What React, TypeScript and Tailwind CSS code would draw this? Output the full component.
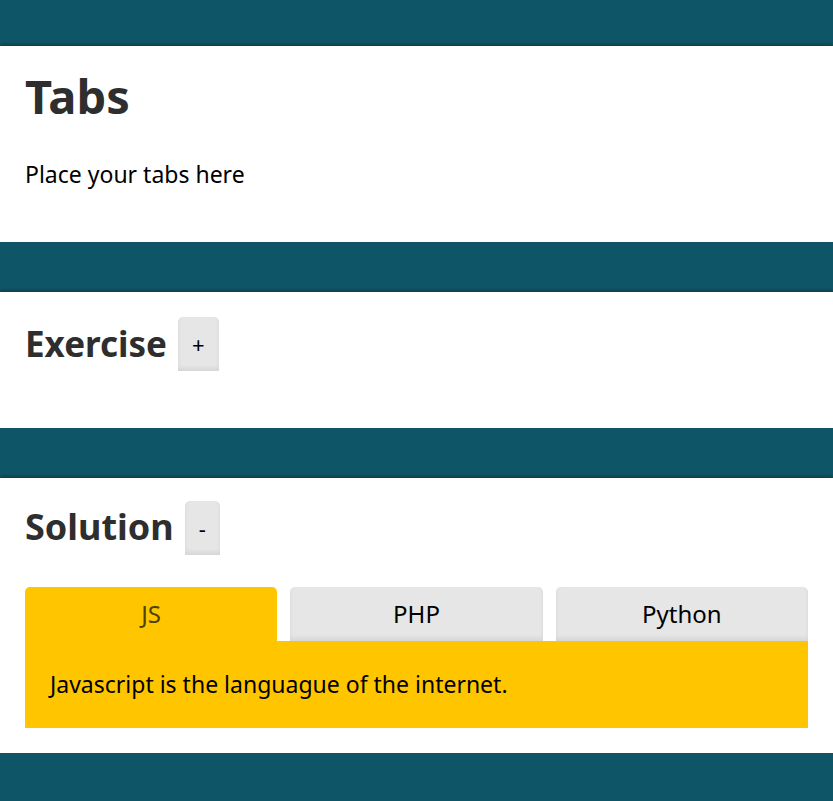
import { useState } from "react";

const tabs = [
  { id: "js", label: "JS", text: "Javascript is the languague of the internet." },
  { id: "php", label: "PHP", text: "PHP runs on the server." },
  { id: "py", label: "Python", text: "Python is great for scripting." },
];

function ToggleButton({ label, onClick }: { label: string; onClick: () => void }) {
  return (
    <button
      onClick={onClick}
      className="h-[54px] px-[14px] bg-[#e6e6e6] rounded-t-[5px] text-[22px] text-black shadow-[inset_0_-3px_4px_rgba(0,0,0,0.07)]"
    >
      {label}
    </button>
  );
}

export default function App() {
  const [exerciseOpen, setExerciseOpen] = useState(false);
  const [solutionOpen, setSolutionOpen] = useState(true);
  const [active, setActive] = useState("js");
  const current = tabs.find((t) => t.id === active);

  return (
    <div
      className="min-h-screen bg-[#0f5568] pt-[46px] pb-12 flex flex-col gap-[50px]"
      style={{ fontFamily: '"Noto Sans", "Open Sans", sans-serif' }}
    >
      {/* Section 1: intro */}
      <section className="bg-white h-[196px] px-[25px] pt-[64px] shadow-[0_-2px_3px_rgba(0,0,0,0.25)]">
        <h1 className="text-[47px] font-bold text-[#2e2e2e] leading-none -mt-[37px]">Tabs</h1>
        <p className="text-[23px] text-black mt-[43px] leading-none">Place your tabs here</p>
      </section>

      {/* Section 2: exercise */}
      <section className="bg-white h-[136px] px-[25px] pt-[25px] shadow-[0_-2px_3px_rgba(0,0,0,0.25)]">
        <div className="flex items-center gap-[11px]">
          <h2 className="text-[35px] font-bold text-[#2e2e2e]">Exercise</h2>
          <ToggleButton label={exerciseOpen ? "-" : "+"} onClick={() => setExerciseOpen(!exerciseOpen)} />
        </div>
      </section>

      {/* Section 3: solution */}
      <section className="bg-white h-[275px] px-[25px] pt-[23px] shadow-[0_-2px_3px_rgba(0,0,0,0.25)]">
        <div className="flex items-center gap-[11px]">
          <h2 className="text-[36px] font-bold text-[#2e2e2e] -mt-[3px]">Solution</h2>
          <ToggleButton label={solutionOpen ? "-" : "+"} onClick={() => setSolutionOpen(!solutionOpen)} />
        </div>
        {solutionOpen && (
          <div className="mt-[32px]">
            <div className="flex gap-[13px]">
              {tabs.map((t) => (
                <button
                  key={t.id}
                  onClick={() => setActive(t.id)}
                  className={
                    t.id === active
                      ? "flex-1 h-[54px] rounded-t-[5px] bg-[#ffc600] text-[#4d4200] text-[24px]"
                      : "flex-1 h-[54px] rounded-t-[5px] bg-[#e6e6e6] text-black text-[24px] shadow-[inset_0_-3px_4px_rgba(0,0,0,0.07)]"
                  }
                >
                  {t.label}
                </button>
              ))}
            </div>
            <div className="bg-[#ffc600] h-[87px] px-[25px] flex items-center text-[23px] text-black">
              {current?.text}
            </div>
          </div>
        )}
      </section>
    </div>
  );
}
